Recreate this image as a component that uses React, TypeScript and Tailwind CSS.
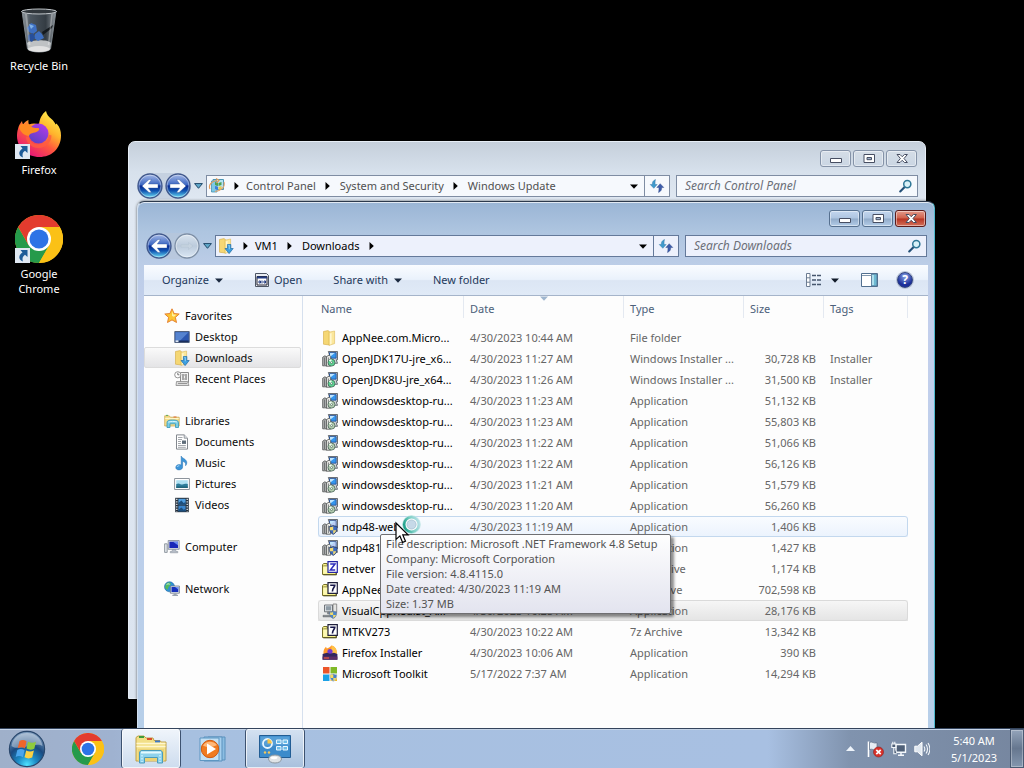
import React, { ReactNode } from "react";

/* ---------- small drawings ---------- */

const FolderShape = () => (
  <>
    <path d="M1.5 1.5 6 .6l1.4 1V15l-5.9-.8z" fill="#f5d774" stroke="#d3a93f" strokeWidth=".6" />
    <path d="M7 2.2 12.6 1v12.6L7 15.4z" fill="#fbe79b" stroke="#dcb958" strokeWidth=".6" />
    <path d="M8 3.4 9.6 3v11l-1.6.5z" fill="#fff6cf" />
  </>
);

const FolderIcon = () => (
  <svg width="16" height="16" viewBox="0 0 16 16" aria-hidden="true"><FolderShape /></svg>
);

const DownloadsIcon = () => (
  <svg width="16" height="16" viewBox="0 0 16 16" aria-hidden="true">
    <FolderShape />
    <path d="M9.4 6.5h3.4v4h2.4L11.1 15.6 7 10.5h2.4z" fill="#3c9fe0" stroke="#1c6aa8" strokeWidth=".7" />
    <path d="M10.3 7.3h1v4" stroke="#9fdcff" strokeWidth=".8" fill="none" />
  </svg>
);

const StarIcon = () => (
  <svg width="16" height="16" viewBox="0 0 16 16" aria-hidden="true">
    <path d="m8 .8 2.1 4.7 5.1.5-3.8 3.4 1.1 5.1L8 11.9l-4.5 2.6 1.1-5.1L.8 6l5.1-.5z" fill="#fcc534" stroke="#e2792a" strokeWidth=".9" strokeLinejoin="round" />
    <path d="m8 3 1.3 3.4 3 .4-2.4 2L8 8z" fill="#fff0a0" />
  </svg>
);

const DesktopIcon = () => (
  <svg width="16" height="16" viewBox="0 0 16 16" aria-hidden="true">
    <path d="M.8 2.5h14.400v11H.8z" fill="#2c57b0" stroke="#52627e" />
    <path d="M1.5 3.2h13L5 12.8H1.5z" fill="#6c9be0" opacity=".65" />
    <path d="M1.3 11.5h13.4v1.6H1.3z" fill="#1b2f5e" />
    <path d="M1.5 11.3h3v1.8h-3z" fill="#dfe9f7" />
  </svg>
);

const RecentIcon = () => (
  <svg width="16" height="16" viewBox="0 0 16 16" aria-hidden="true">
    <path d="M6.5 1.5h8v10h-8z" fill="#f3f3f3" stroke="#8b8b8b" />
    <path d="M8 4h5M8 6h2m1 0h2M8 8h5M9 3v6m3-6v6" stroke="#7c7c7c" strokeWidth=".8" />
    <path d="M2.5 10.5h11l1.5 4H2z" fill="#dedede" stroke="#898989" strokeWidth=".8" />
    <path d="M4 12.4h9" stroke="#777" strokeWidth=".8" />
    <circle cx="3.8" cy="3.8" r="3.1" fill="#fff" stroke="#888" strokeWidth=".9" />
    <path d="M3.8 1.8v2h1.6" stroke="#555" strokeWidth=".8" fill="none" />
  </svg>
);

const LibrariesIcon = () => (
  <svg width="16" height="16" viewBox="0 0 16 16" aria-hidden="true">
    <path d="M.7 13V2.8h4.5l1.2 1.4h8.8V13z" fill="#f7e08d" stroke="#c4a04a" strokeWidth=".7" />
    <path d="M1.2 5.5h13.5" stroke="#fff5c8" />
    <path d="M2 2.4h2" stroke="#5eaa5a" /><path d="M9.5 4h3" stroke="#e0662f" />
    <path d="M3 14.5V9.5C3 7.5 5 7 8.5 7s6 .6 6 2.5v5h-3v-3.7H6v3.7z" fill="#79cde5" stroke="#3595b5" strokeWidth=".8" />
    <path d="M4.3 9.2C6 8.3 11 8.2 13 9" stroke="#d8f5ff" fill="none" />
  </svg>
);

const DocumentIcon = () => (
  <svg width="16" height="16" viewBox="0 0 16 16" aria-hidden="true">
    <path d="M2.5.9h7.7l3.3 3.3v10.9h-11z" fill="#fff" stroke="#83888e" />
    <path d="M10.2.9v3.3h3.3" fill="#dfe3e8" stroke="#83888e" strokeWidth=".8" />
    <path d="M4 3.5h4.5M4 5.5h4M4 7.5h3M4 9.5h3M4 11.5h7.8M4 13.3h7.8" stroke="#8d9298" strokeWidth=".8" />
    <path d="M8 6.5h4v3.4H8z" fill="#5f6d7a" />
  </svg>
);

const MusicIcon = () => (
  <svg width="16" height="16" viewBox="0 0 16 16" aria-hidden="true">
    <path d="M7.2 1c.3 2.4 5.8 2.8 5.6 7-.1 1-.6 2-1.2 2.7.6-3-1.2-4-3-4.4v5.6c0 1.8-1.6 3-3.6 3s-3.2-1-3.2-2.500 1.400-2.800 3.400-2.800c.8 0 1.400.2 2 .5z" fill="#3d95d8" stroke="#1f6cb0" strokeWidth=".5" />
    <path d="M3 12c.3-.9 1.3-1.3 2.3-1.2" stroke="#b7e3ff" fill="none" />
  </svg>
);

const PicturesIcon = () => (
  <svg width="16" height="16" viewBox="0 0 16 16" aria-hidden="true">
    <path d="M.6 2.5h14.800v11H.6z" fill="#fff" stroke="#8d949c" />
    <path d="M2.2 4.200h11.600v7.600H2.200z" fill="#aee0f2" />
    <path d="M2.2 8.2c3-2 4 .6 6 .3s3-1.3 5.6-.6v3.900H2.200z" fill="#2d7c9a" />
    <path d="M2.2 10.600h11.600v1.200H2.200z" fill="#185b70" />
  </svg>
);

const VideosIcon = () => (
  <svg width="16" height="16" viewBox="0 0 16 16" aria-hidden="true">
    <path d="M1.2.8h13.6v14.4H1.2z" fill="#25303c" />
    <path d="M4.4 1.800h7.200v5.600H4.400z" fill="#4f9ee0" /><path d="M4.400 8.600h7.200v5.600H4.400z" fill="#3c86cd" />
    <path d="m4.400 6 3-2.400L9.600 6l2-1v2.400H4.400zM4.400 12.800l3-2.400 2.200 2.400 2-1v2.400H4.400z" fill="#1d4f7e" />
    <path d="M2.800 1.800v13M13.200 1.800v13" stroke="#e8edf2" strokeWidth="1.3" strokeDasharray="1.3 1.2" />
  </svg>
);

const ComputerIcon = () => (
  <svg width="16" height="16" viewBox="0 0 16 16" aria-hidden="true">
    <path d="M.6 4.800h2.600v8.600H.6z" fill="#e2e6ea" stroke="#7c858e" strokeWidth=".8" />
    <path d="M4.200 1.500h11v8.800h-11z" fill="#d7dce4" stroke="#7f8897" strokeWidth=".8" />
    <path d="M5.400 2.700h8.600v6.300H5.400z" fill="#1a28b8" />
    <path d="M9 2.700h5v3.500z" fill="#6a8bf0" />
    <path d="M8.500 10.500h3l.7 2h1.600v1.300H6.200v-1.300h1.600z" fill="#b6bdc7" stroke="#838b96" strokeWidth=".5" />
  </svg>
);

const NetworkIcon = () => (
  <svg width="16" height="16" viewBox="0 0 16 16" aria-hidden="true">
    <circle cx="5.5" cy="5.8" r="5" fill="#2f92d6" stroke="#1c659f" strokeWidth=".6" />
    <path d="M2 3c1.6-2 4.4-2 5 0L4.800 5.400 3.400 9 1 6.800zM6 7l3-1v3.800L7 10z" fill="#55bb59" />
    <path d="M2.600 3.600c1-.9 2-.9 3-.4" stroke="#d0f1ff" fill="none" />
    <path d="M6.400 5h9v7.200h-9z" fill="#dfe5ed" stroke="#6c7687" strokeWidth=".8" />
    <path d="M7.500 6h6.800v5H7.500z" fill="#1731bd" /><path d="M11 6h3.300v2.600z" fill="#7497f5" />
    <path d="M9.800 12.500h2.600l.4 1.200h1.200v1.200H8.300v-1.200h1.100z" fill="#9ca5b1" />
  </svg>
);

const InstallerIcon = ({ tone = "box" }: { tone?: "green" | "box" | "shield" }) => (
  <svg width="16" height="16" viewBox="0 0 16 16" aria-hidden="true">
    <path d="M6.300.5h9.200v8.300h-1.300l1.300 3.500h-5z" fill="#d3d6da" stroke="#4a5058" strokeWidth=".8" />
    <path d="M7.500 1.600h6.700v5.600H7.500z" fill={tone === "shield" ? "#b8cdf4" : "#3596ee"} stroke="#143b82" strokeWidth=".7" />
    <path d="M8 2.100h4.800L8 5.800z" fill="#bfe5ff" />
    <path d="m.7 6.200 2.200-1.400 2 1.200v8.800H.7z" fill="#b4b6b6" stroke="#4a4c4c" strokeWidth=".8" />
    <path d="M4.400 5.700 7.200 4l1.500 1.500v9.700H4.400z" fill="#e9eae6" stroke="#4a4c4c" strokeWidth=".8" />
    <path d="M2.500 6.500V14M6.400 6.500V14" stroke="#54585a" strokeWidth=".7" />
    {tone === "shield" ? (
      <>
        <path d="M7.200 7.600c1.700 0 2.900-.4 4-1.100 1.200.7 2.300 1.100 4 1.100 0 4-.9 6.300-4 7.800-3-1.500-4-3.800-4-7.800z" fill="#3d6cc0" stroke="#26375c" strokeWidth=".7" />
        <path d="M11.200 7.500v3.700H8c-.3-.9-.3-1.800-.3-3 1.500-.1 2.600-.3 3.500-.7zM11.200 11.200h3c-.5 1.500-1.400 2.600-3 3.500z" fill="#f4db72" />
      </>
    ) : (
      <>
        <circle cx="9.500" cy="11.600" r="3.500" fill={tone === "green" ? "#5fd493" : "#b4ccb0"} stroke="#38574b" strokeWidth=".7" />
        <path d="M9.500 11.600 6.800 9.600a3.300 3.300 0 0 1 2.700-1.400z" fill="#f3fff3" />
        <circle cx="9.500" cy="11.600" r="1" fill="#fff" stroke="#406252" strokeWidth=".6" />
      </>
    )}
  </svg>
);

const ArchiveIcon = ({ z }: { z?: boolean }) => (
  <svg width="16" height="16" viewBox="0 0 16 16" aria-hidden="true">
    <path d="M.5 13.500V3.800L1.600 2.500h3.600V4H14v9.500z" fill="#f8f28c" stroke="#77712a" />
    <path d="M1.300 5h4M1.300 13.900H14.500V11" stroke="#4b481b" strokeWidth=".8" fill="none" />
    <path d="M1.500 5.500h3.500v7H1.500z" fill="#fdf9b4" />
    <path d="M6 .7h9.300v10.600H6z" fill="#fff" stroke={z ? "#2525a5" : "#20203c"} strokeWidth="1.200" />
    {z
      ? <path d="M8.200 3h4.800L8.400 9h4.800" stroke="#2e2ebc" strokeWidth="1.500" fill="none" />
      : <path d="M8.200 3.200h4.600c0 2-2.400 3-2.400 6.300" stroke="#18184a" strokeWidth="1.600" fill="none" />}
  </svg>
);

const SetupIcon = () => (
  <svg width="16" height="16" viewBox="0 0 16 16" aria-hidden="true">
    <path d="M11 1h3.700v8H11z" fill="#e4e4e2" stroke="#777" strokeWidth=".8" />
    <path d="M2.500 2h8v6.800h-8z" fill="#e6eaed" stroke="#63686d" strokeWidth=".9" />
    <path d="M3.800 3.200h5.400v4.200H3.800z" fill="#8e9ba5" />
    <path d="M5.600 9h2v2h-2zM1 12.300h8v1.600H1z" fill="#8b9094" stroke="#606468" strokeWidth=".5" />
    <path d="M7.500 9c1.400 0 2.500-.3 3.600-1 1.100.7 2.200 1 3.600 1 0 3.500-.8 5.200-3.600 6.500C8.300 14.200 7.500 12.500 7.500 9z" fill="#4b86c9" stroke="#6c7786" strokeWidth=".6" />
    <path d="M11.100 9v3H8.300c-.2-.8-.3-1.500-.3-2.400 1.200-.1 2.200-.2 3.100-.6zM11.100 12h2.800c-.4 1.300-1.300 2.200-2.800 2.900z" fill="#f1d96b" />
  </svg>
);

const FirefoxInstallerIcon = () => (
  <svg width="16" height="16" viewBox="0 0 16 16" aria-hidden="true">
    <path d="M1.500 9C1 5.500 2.500 3 4 1.800l.8 1.700 2.400-.9L9.600.6c3.900 1.500 5.600 4 5 8.400z" fill="#ff9a2b" />
    <path d="M9.600.6c3.900 1.500 5.600 4 5 8.400H9z" fill="#ffc247" />
    <circle cx="8" cy="6.500" r="2.600" fill="#743bd2" />
    <path d="M.6 9 5 7.800l3 1 4-1L15.400 9v5.700H.6z" fill="#33265f" />
    <path d="M.6 11.500h14.800v3.200H.6z" fill="#5a2f66" />
    <path d="M2 13h5" stroke="#e8573d" strokeWidth="1.200" />
  </svg>
);

const ToolkitIcon = () => (
  <svg width="16" height="16" viewBox="0 0 16 16" aria-hidden="true">
    <path d="M1 1h6.500v6.500H1z" fill="#ec5529" /><path d="M8.500 1H15v6.500H8.500z" fill="#7fb927" />
    <path d="M1 8.500h6.500V15H1z" fill="#1ba1e6" /><path d="M8.500 8.500H15V15H8.500z" fill="#f3b91b" />
    <path d="M7.600 8.600c1.500 0 2.600-.3 3.700-1 1.100.7 2.200 1 3.700 1 0 3.500-.9 5.600-3.700 6.900-2.800-1.300-3.700-3.400-3.700-6.900z" fill="#4782c9" stroke="#d8dee6" strokeWidth=".6" />
    <path d="M11.300 8.300v3.600H8.500c-.3-1-.4-1.800-.4-2.800zM11.300 11.900h2.900c-.5 1.400-1.400 2.400-2.900 3.100z" fill="#f6da62" />
  </svg>
);

const UpdateIcon = () => (
  <svg width="18" height="18" viewBox="0 0 18 18" aria-hidden="true">
    <path d="M5 2.500h10.500v10H5z" fill="#b4e3f3" stroke="#4a95b5" />
    <path d="M3.500 4H9v11H3.500z" fill="#7dc8e6" stroke="#4793b1" strokeWidth=".8" />
    <path d="m7 5 3 1v3L7 8zM10.500 6l3-1v3l-3 1z" fill="#4da054" /><path d="m7 9 3 1v3l-3-1z" fill="#3b7ddd" /><path d="m10.500 10 3-1v3l-3 1z" fill="#eccb4c" />
    <path d="M2 12C0 8 4 4 9 3.500M8 1.500l3 1.800L8.500 6" stroke="#e79a56" strokeWidth="1.200" fill="none" />
    <path d="M16 5c1.500 5-3 9-9 9.500" stroke="#e3a36c" strokeWidth="1.100" fill="none" />
  </svg>
);

const Down = ({ color = "#1b2a40" }: { color?: string }) => (
  <svg width="8" height="5" viewBox="0 0 8 5" aria-hidden="true"><path d="M0 .5h8L4 4.800z" fill={color} /></svg>
);

const Crumb = () => (
  <svg width="5" height="8" viewBox="0 0 5 8" aria-hidden="true"><path d="M.5 0 4.800 4 .5 8z" fill="#000" /></svg>
);

const RefreshIcon = () => (
  <svg width="16" height="16" viewBox="0 0 16 16" aria-hidden="true">
    <path d="M6.500 1.500C4 2.500 3.200 4.200 3.300 6.500H1.200l3.600 3.800 3.400-3.800H6.100c-.1-2 0-3.500.4-5z" fill="#3f9bcd" stroke="#2c6d9c" strokeWidth=".4" />
    <path d="M9.500 14.500c2.500-1 3.300-2.700 3.200-5h2.100l-3.600-3.800-3.400 3.800h2.100c.1 2 0 3.500-.4 5z" fill="#3c5caa" stroke="#2a4484" strokeWidth=".4" />
  </svg>
);

const SearchIcon = () => (
  <svg width="14" height="14" viewBox="0 0 14 14" aria-hidden="true">
    <path d="M1.300 12.800 6 8" stroke="#245077" strokeWidth="2.200" strokeLinecap="round" />
    <circle cx="8.800" cy="5" r="3.800" fill="#d8f1f8" stroke="#2f7796" strokeWidth="1.600" />
  </svg>
);

const NavArrow = ({ dir, disabled, label }: { dir: "left" | "right"; disabled?: boolean; label: string }) => (
  <button type="button" aria-label={label} className="block size-[26px] shrink-0 rounded-full">
    <svg width="26" height="26" viewBox="0 0 26 26" aria-hidden="true">
      <defs>
        <linearGradient id="navBall" x1="0" y1="0" x2="0" y2="1">
          <stop offset="0" stopColor="#a9bce8" /><stop offset=".44" stopColor="#3e68c2" />
          <stop offset=".5" stopColor="#0b2c93" /><stop offset=".7" stopColor="#1053b0" /><stop offset="1" stopColor="#6fe6fb" />
        </linearGradient>
        <linearGradient id="navOff" x1="0" y1="0" x2="0" y2="1">
          <stop offset="0" stopColor="#dae4ef" /><stop offset=".5" stopColor="#bccbdc" /><stop offset="1" stopColor="#dbe8f5" />
        </linearGradient>
      </defs>
      <circle cx="13" cy="13" r="12" fill={disabled ? "url(#navOff)" : "url(#navBall)"} stroke={disabled ? "#7d8fa6" : "#42598c"} strokeWidth="1.300" />
      <circle cx="13" cy="13" r="10.900" fill="none" stroke="#fff" strokeOpacity=".4" />
      <g transform={dir === "right" ? "translate(26 0) scale(-1 1)" : undefined}>
        {disabled
          ? <path d="M7 13l4.500-3.500v2.300H19v2.400h-7.500v2.300z" fill="#c6d3e0" stroke="#b3c2d2" strokeWidth=".5" />
          : <path d="M5 13l7-6.500h2.500L11.300 11H21v4h-9.700l3.200 4.500H12z" fill="#fff" stroke="#31569c" strokeWidth=".4" />}
      </g>
    </svg>
  </button>
);

/* ---------- window frame ---------- */

const captionGlyphs: Record<string, ReactNode> = {
  Minimize: <path d="M2.500 6.500h11v4h-11z" fill="#fff" stroke="#474e62" />,
  Maximize: (
    <>
      <path d="M3 2.500h10.500v8H3z" fill="#fff" stroke="#474e62" />
      <path d="M6 5.500h4.500v2.200H6z" fill="#9fb2cc" stroke="#474e62" />
    </>
  ),
  Close: (
    <path d="M3 2.500h3l2.200 2.200 2.200-2.200h3L10 6.500l3.400 4h-3L8.200 8.300 6 10.500H3l3.400-4z" fill="#fff" stroke="#474e62" strokeLinejoin="round" />
  ),
};

function CaptionButtons({ active }: { active?: boolean }) {
  return (
    <div className="flex h-[33px] items-start justify-end gap-0.5 pt-2 pr-2">
      {["Minimize", "Maximize", "Close"].map((name) => {
        const tone = !active
          ? "border-[#8593a8] bg-linear-to-b from-[#d5dde7] to-[#cad6e3]"
          : name === "Close"
            ? "border-[#5b1c1c] bg-[linear-gradient(#e39b8c_0%,#d0604b_48%,#b53322_52%,#d4705a_100%)]"
            : "border-[#56708f] bg-[linear-gradient(#c3d6ee_0%,#aec5e1_48%,#91abc9_52%,#b3cce8_100%)]";
        return (
          <button key={name} type="button" aria-label={name}
            className={`flex h-[17px] w-[31px] items-center justify-center rounded-[3px] border shadow-[inset_0_0_0_1px_rgba(255,255,255,0.45)] ${tone}`}>
            <svg width="16" height="13" viewBox="0 0 16 13" aria-hidden="true">{captionGlyphs[name]}</svg>
          </button>
        );
      })}
    </div>
  );
}

function AddressRow({ icon, crumbs, trailing, search, active }: {
  icon: ReactNode; crumbs: string[]; trailing?: boolean; search: string; active?: boolean;
}) {
  const border = active ? "border-[#64799a]" : "border-[#7f8da3]";
  const fill = active ? "bg-[#edf1fc]" : "bg-[#f6f9fd]";
  return (
    <div className="flex h-[22px] items-center pr-[7px] pl-2">
      <div className="flex items-center gap-0.5 rounded-full bg-[#b9c6d8]/60">
        <NavArrow dir="left" label="Back" />
        <NavArrow dir="right" label="Forward" disabled={active} />
      </div>
      <button type="button" aria-label="Recent pages" className="flex w-[15px] justify-center">
        <svg width="9" height="6" viewBox="0 0 9 6" aria-hidden="true"><path d="M.6.6h7.800L4.500 5.300z" fill="#5fa9cb" stroke="#1f4668" /></svg>
      </button>
      <div className={`flex h-[22px] flex-1 items-center border ${border} ${fill}`}>
        <span className="flex w-[19px] justify-center">{icon}</span>
        <nav aria-label="Location" className={`flex flex-1 items-center ${active ? "text-black" : "text-[#505050]"}`}>
          {crumbs.map((c, i) => (
            <span key={c} className="flex items-center">
              <span className={`flex justify-center ${i === 0 ? "w-5" : "w-6"}`}><Crumb /></span>
              <a href="#">{c}</a>
            </span>
          ))}
          {trailing && <span className="flex w-6 justify-center"><Crumb /></span>}
        </nav>
        <button type="button" aria-label="Previous locations" className="flex w-[21px] justify-center"><Down color="#000" /></button>
        <button type="button" aria-label="Refresh" className={`flex h-full w-[25px] items-center justify-center border-l ${border}`}><RefreshIcon /></button>
      </div>
      <label className={`ml-1.5 flex h-[22px] w-[242px] items-center border pr-[5px] pl-2 ${border} ${fill}`}>
        <input type="search" placeholder={search} aria-label={search}
          className="w-full min-w-0 bg-transparent text-[12px] italic outline-none placeholder:text-[#6b6f78]" />
        <SearchIcon />
      </label>
    </div>
  );
}

/* ---------- explorer content ---------- */

type NavItem = { name: string; icon: ReactNode; selected?: boolean };
const groups: { head: NavItem; items: NavItem[] }[] = [
  {
    head: { name: "Favorites", icon: <StarIcon /> },
    items: [
      { name: "Desktop", icon: <DesktopIcon /> },
      { name: "Downloads", icon: <DownloadsIcon />, selected: true },
      { name: "Recent Places", icon: <RecentIcon /> },
    ],
  },
  {
    head: { name: "Libraries", icon: <LibrariesIcon /> },
    items: [
      { name: "Documents", icon: <DocumentIcon /> },
      { name: "Music", icon: <MusicIcon /> },
      { name: "Pictures", icon: <PicturesIcon /> },
      { name: "Videos", icon: <VideosIcon /> },
    ],
  },
  { head: { name: "Computer", icon: <ComputerIcon /> }, items: [] },
  { head: { name: "Network", icon: <NetworkIcon /> }, items: [] },
];

function NavigationPane() {
  return (
    <nav aria-label="Folders" className="flex w-[159px] shrink-0 flex-col gap-[21px] border-r border-[#d6e0ee] pt-[9px] pr-px">
      {groups.map(({ head, items }) => (
        <ul key={head.name}>
          <li><a href="#" className="flex h-[21px] items-center gap-[5px] pl-5">{head.icon}{head.name}</a></li>
          {items.map((it) => (
            <li key={it.name}>
              <a href="#" className={`flex h-[21px] items-center gap-[5px] border pl-[29px] ${it.selected ? "rounded-[2px] border-[#dcdcdc] bg-linear-to-b from-[#fafafa] to-[#e4e4e6]" : "border-transparent"}`}>
                {it.icon}{it.name}
              </a>
            </li>
          ))}
        </ul>
      ))}
    </nav>
  );
}

type FileRow = { icon: ReactNode; name: string; date: string; type: string; size?: string; tags?: string; state?: "hover" | "selected" };
const d = "4/30/2023 ";
const files: FileRow[] = [
  { icon: <FolderIcon />, name: "AppNee.com.Micro...", date: d + "10:44 AM", type: "File folder" },
  { icon: <InstallerIcon tone="green" />, name: "OpenJDK17U-jre_x6...", date: d + "11:27 AM", type: "Windows Installer ...", size: "30,728 KB", tags: "Installer" },
  { icon: <InstallerIcon tone="green" />, name: "OpenJDK8U-jre_x64...", date: d + "11:26 AM", type: "Windows Installer ...", size: "31,500 KB", tags: "Installer" },
  { icon: <InstallerIcon />, name: "windowsdesktop-ru...", date: d + "11:23 AM", type: "Application", size: "51,132 KB" },
  { icon: <InstallerIcon />, name: "windowsdesktop-ru...", date: d + "11:23 AM", type: "Application", size: "55,803 KB" },
  { icon: <InstallerIcon />, name: "windowsdesktop-ru...", date: d + "11:22 AM", type: "Application", size: "51,066 KB" },
  { icon: <InstallerIcon />, name: "windowsdesktop-ru...", date: d + "11:22 AM", type: "Application", size: "56,126 KB" },
  { icon: <InstallerIcon />, name: "windowsdesktop-ru...", date: d + "11:21 AM", type: "Application", size: "51,579 KB" },
  { icon: <InstallerIcon />, name: "windowsdesktop-ru...", date: d + "11:20 AM", type: "Application", size: "56,260 KB" },
  { icon: <InstallerIcon tone="shield" />, name: "ndp48-web", date: d + "11:19 AM", type: "Application", size: "1,406 KB", state: "hover" },
  { icon: <InstallerIcon tone="shield" />, name: "ndp481", date: d + "11:19 AM", type: "Application", size: "1,427 KB" },
  { icon: <ArchiveIcon z />, name: "netver", date: d + "10:44 AM", type: "zip Archive", size: "1,174 KB" },
  { icon: <ArchiveIcon />, name: "AppNee", date: d + "10:42 AM", type: "7z Archive", size: "702,598 KB" },
  { icon: <SetupIcon />, name: "VisualCppRedist_A...", date: d + "10:25 AM", type: "Application", size: "28,176 KB", state: "selected" },
  { icon: <ArchiveIcon />, name: "MTKV273", date: d + "10:22 AM", type: "7z Archive", size: "13,342 KB" },
  { icon: <FirefoxInstallerIcon />, name: "Firefox Installer", date: d + "10:06 AM", type: "Application", size: "390 KB" },
  { icon: <ToolkitIcon />, name: "Microsoft Toolkit", date: "5/17/2022 7:37 AM", type: "Application", size: "14,294 KB" },
];

const rowTone = {
  hover: "rounded-[3px] bg-linear-to-b from-[#fafcff] to-[#ebf3fd] outline outline-[#c3d8ee] -outline-offset-1",
  selected: "rounded-[3px] bg-linear-to-b from-[#f7f7f7] to-[#e4e4e4] outline outline-[#dadada] -outline-offset-1",
};

function FileTable() {
  return (
    <div className="min-w-0 flex-1 pl-[15px]">
      <table className="w-[590px] table-fixed border-separate border-spacing-0 text-left whitespace-nowrap">
        <colgroup>
          <col className="w-[146px]" /><col className="w-[160px]" /><col className="w-[120px]" /><col className="w-[80px]" /><col />
        </colgroup>
        <thead>
          <tr className="h-[31px] text-[#4c607a]">
            {["Name", "Date", "Type", "Size", "Tags"].map((h, i) => (
              <th key={h} className={`relative p-0 pb-[5px] font-normal ${i === 0 ? "pl-[3px]" : "pl-1.5"}`}>
                <button type="button">{h}</button>
                <span className="absolute top-0 right-0 h-[22px] w-px bg-[#e4e9f1]" />
                {h === "Date" && <span className="absolute top-0 left-1/2 -translate-x-1/2"><Down color="#9fb6cf" /></span>}
              </th>
            ))}
          </tr>
        </thead>
        <tbody className="text-[#666]">
          {files.map((f, i) => (
            <tr key={i} className={`h-[21px] ${f.state ? rowTone[f.state] : ""}`}>
              <td className="p-0 pl-1 text-black"><span className="flex items-center gap-1">{f.icon}{f.name}</span></td>
              <td className="p-0 pl-1.5">{f.date}</td>
              <td className="p-0 pl-1.5">{f.type}</td>
              <td className="p-0 pr-2 text-right">{f.size}</td>
              <td className="p-0 pl-1.5">{f.tags}</td>
            </tr>
          ))}
        </tbody>
      </table>
    </div>
  );
}

function CommandBar() {
  return (
    <div className="flex h-[31px] items-center border-b border-[#a5b4ca] bg-[linear-gradient(#fafcff_0%,#eaf2fc_48%,#dce6f4_52%,#e0eaf7_100%)] pr-[15px] pl-[18px] text-[#1e395b]">
      <button type="button" className="flex items-center gap-1.5">Organize <Down /></button>
      <button type="button" className="ml-[31px] flex items-center gap-1">
        <svg width="16" height="16" viewBox="0 0 16 16" aria-hidden="true">
          <path d="M1.500 1.500h11l2 2v11h-13z" fill="#e9edf2" stroke="#4c5564" />
          <path d="M3 4.500h10v8.500H3z" fill="#fff" stroke="#223" />
          <path d="M3 4.500h10v2H3z" fill="#223c82" />
          <path d="M5 9h1.500v2H5zM8 8.500v3M10 9h1.500v2H10z" fill="none" stroke="#223c82" />
        </svg>
        Open
      </button>
      <button type="button" className="ml-[31px] flex items-center gap-1.5">Share with <Down /></button>
      <button type="button" className="ml-[31px]">New folder</button>
      <div className="ml-auto flex items-center">
        <button type="button" aria-label="Change your view">
          <svg width="16" height="14" viewBox="0 0 16 14" aria-hidden="true">
            <path d="M.5.500h3.500v13H.5zM.5 4.800h3.500M.5 9.200h3.500" fill="#fff" stroke="#6c7c92" />
            <path d="M6 2.500h10M6 7h10M6 11.500h10" stroke="#46566e" strokeWidth="1.300" strokeDasharray="4 1" />
          </svg>
        </button>
        <button type="button" aria-label="More views" className="flex w-[26px] justify-center"><Down color="#111a28" /></button>
        <button type="button" aria-label="Show the preview pane" className="ml-[13px]">
          <svg width="17" height="14" viewBox="0 0 17 14" aria-hidden="true">
            <path d="M.5.500h16v13H.5z" fill="#fff" stroke="#516f8f" />
            <path d="M10.500 1h5.500v12h-5.500z" fill="#6db9d2" stroke="#516f8f" strokeWidth=".8" />
            <path d="M1 2.500h9.500" stroke="#8298af" /><path d="M12 2v10" stroke="#c4ecf6" strokeWidth="1.500" />
          </svg>
        </button>
        <button type="button" aria-label="Get help" className="ml-[19px] flex size-4 items-center justify-center rounded-full border border-[#33467f] bg-[radial-gradient(circle_at_50%_25%,#8ba6e8,#1c2f99_65%)] text-[12px] leading-none font-bold text-white shadow-[0_0_0_1px_#b7c2d6]">?</button>
      </div>
    </div>
  );
}

/* ---------- desktop ---------- */

const ChromeLogo = ({ size }: { size: number }) => (
  <svg width={size} height={size} viewBox="0 0 48 48" aria-hidden="true">
    <circle cx="24" cy="24" r="24" fill="#fbc116" />
    <path d="M24 24 3.200 12A24 24 0 0 1 44.800 12z" fill="#e33b2e" />
    <path d="M3.200 12a24 24 0 0 0 20.800 36L34.400 30 24 24 13.600 30z" fill="#259a4b" />
    <path d="M24 12h20.800A24 24 0 0 1 24 48l10.400-18z" fill="#fbc116" />
    <path d="M3.200 12 13.600 30 24 24V12z" fill="#e33b2e" />
    <circle cx="24" cy="24" r="12" fill="#fff" /><circle cx="24" cy="24" r="9.500" fill="#2d73e6" />
  </svg>
);

const FirefoxLogo = () => (
  <svg width="48" height="48" viewBox="0 0 48 48" aria-hidden="true">
    <defs>
      <linearGradient id="ffBody" x1=".85" y1=".05" x2=".25" y2=".95">
        <stop offset="0" stopColor="#fff04d" /><stop offset=".35" stopColor="#ffb52d" />
        <stop offset=".62" stopColor="#ff5a3c" /><stop offset="1" stopColor="#e5157a" />
      </linearGradient>
      <linearGradient id="ffGlobe" x1=".8" y1="0" x2=".2" y2="1"><stop offset="0" stopColor="#b43ae8" /><stop offset="1" stopColor="#5741c4" /></linearGradient>
    </defs>
    <path d="M3 18c.6-3 2-5.500 4-8 .2 1.500.5 2.500 1 3.500 1.500-2 3.300-3.700 5.500-4.500-.3 1.800 0 3.500.5 4.500 3-1.300 7-1.500 10 0C24.500 8 27 3 31 0c.8 3.500 2.500 5.500 5.500 8 2 1.700 3.300 3.500 4 5.500l1-1C45 16 46 20 46 24.500 46 37.500 36.500 46 24.500 46S2 37 2 25c0-2.500.3-5 1-7z" fill="url(#ffBody)" />
    <circle cx="23.500" cy="22.500" r="10" fill="url(#ffGlobe)" />
    <path d="M4 16c1.500-3 3-3.500 4-3 2 .5 4 .3 6 0 2 2.500 4 4.500 9.500 4 1.200.8.8 2.200-.8 3.200-3.500 2.300-8.200 1.300-8.700 4.800-4 0-9-4-10-9z" fill="#ff8a22" />
    <path d="M14 25c0 5 4 8.500 9 8.500 6 0 10.500-4 10.500-10l3 1c0 7-6 12.500-13 12.500S11 32 11 26z" fill="#ff5b41" opacity=".8" />
  </svg>
);

const RecycleBin = () => (
  <svg width="48" height="48" viewBox="0 0 48 48" aria-hidden="true">
    <defs><linearGradient id="bin" x1="0" x2="1"><stop offset="0" stopColor="#8f979d" /><stop offset=".25" stopColor="#4b555e" /><stop offset=".7" stopColor="#343c43" /><stop offset="1" stopColor="#949ba1" /></linearGradient></defs>
    <path d="M7 4h34l-5.500 38c-3 4-20 4-23 0z" fill="url(#bin)" stroke="#7f878d" />
    <ellipse cx="24" cy="4.500" rx="17.500" ry="2.500" fill="#30363b" stroke="#c3c8cc" strokeWidth="1" />
    <path d="M12 36c4-3 20-4 24 0l-1 6c-4 3.500-18 3.500-22 0z" fill="#bfc2c4" /><ellipse cx="24" cy="42" rx="11" ry="3" fill="#e2e2e2" />
    <path d="m12 21 4-5 5 2 1 6-4 3-4-2zM20 27l4-3 3 3 2 4-6 3-4-3z" fill="#3e6fc0" />
    <path d="m13 28 5-2 2 5-3 4-4-2z" fill="#274f9a" /><path d="m14 17 5 2-3 3z" fill="#7fb2e8" />
    <path d="m27 25 11-7-1 3-9 7z" fill="#14191d" />
    <path d="m11 7 3.500 31" stroke="#fff" strokeOpacity=".3" strokeWidth="2" /><path d="M37 7 33.500 38" stroke="#fff" strokeOpacity=".3" strokeWidth="1.500" />
  </svg>
);

const ShortcutMark = () => (
  <svg width="15" height="15" viewBox="0 0 15 15" className="absolute bottom-0 left-0" aria-hidden="true">
    <path d="M0 0h15v15H0z" fill="#dfe8f2" />
    <path d="M5.500 2h7v7L10 6.800C7.500 8.500 7 10.500 8 13.500 3.500 12 2.800 7.500 7.500 4.500z" fill="#1d5b98" />
  </svg>
);

function DesktopItem({ label, icon, shortcut }: { label: string; icon: ReactNode; shortcut?: boolean }) {
  return (
    <a href="#" className="flex h-[104px] w-[78px] flex-col items-center gap-[3px] text-center leading-[15px] text-white">
      <span className="relative">{icon}{shortcut && <ShortcutMark />}</span>
      <span className="w-[70px]">{label}</span>
    </a>
  );
}

/* ---------- taskbar ---------- */

const StartOrb = () => (
  <svg width="38" height="38" viewBox="0 0 38 38" aria-hidden="true">
    <defs>
      <radialGradient id="orb" cx=".5" cy=".95" r=".9"><stop offset="0" stopColor="#4fe3ff" /><stop offset=".3" stopColor="#1c8cc6" /><stop offset=".62" stopColor="#1a4a80" /><stop offset="1" stopColor="#7c9bbd" /></radialGradient>
    </defs>
    <circle cx="19" cy="19" r="17.600" fill="url(#orb)" stroke="#29476c" strokeWidth="1.200" />
    <path d="M3.500 16C5 7 12 3 19 3s14 4 15.500 13C28 11 10 22 3.500 16z" fill="#fff" opacity=".38" />
    <path d="M11.500 11c2.500-1.500 5-1 7 .3L17 18.500c-2.500-1.400-4.700-1.500-7.300-.3z" fill="#f0652a" />
    <path d="M20 11.800c2.800 1.200 5.300 1.400 8-.1l-1.700 7c-2.700 1.300-5.200 1.200-7.800-.1z" fill="#8fcb3d" />
    <path d="M9.300 20c2.500-1.300 5-1.100 7.300.2l-1.700 7c-2.300-1.300-4.700-1.500-7.200-.2z" fill="#4aa5ec" />
    <path d="M18.200 20.600c2.500 1.200 5 1.300 7.700 0l-1.700 7c-2.500 1.200-5.200 1.100-7.700-.3z" fill="#fbd143" />
  </svg>
);

const ExplorerLarge = () => (
  <svg width="34" height="30" viewBox="0 0 34 30" aria-hidden="true">
    <path d="M2 27V3.500L4 2h6l2 2h7l1 2.500h6L27 8h5v19z" fill="#f2df87" stroke="#bfa04a" />
    <path d="M5 3h5" stroke="#3d9c3c" strokeWidth="2" /><path d="M13 5h5" stroke="#d94c2b" strokeWidth="2" /><path d="M21 7.500h5" stroke="#3c79c9" strokeWidth="2" />
    <path d="M2.500 9.500h29M2.500 12.500h29" stroke="#fff7cf" strokeWidth="1.500" />
    <path d="M4 15h26v12H4z" fill="#ebd276" />
    <path d="M5.500 29V19c0-1.500 1-2.500 2.500-2.500h18c1.500 0 2.500 1 2.500 2.500v10h-5v-5.500h-13V29z" fill="#8ed2ec" stroke="#4a9dbd" />
    <path d="M7 18.500h20" stroke="#e4faff" strokeWidth="2" /><path d="M8 21v7M26 21v7" stroke="#c9f1ff" strokeWidth="1.500" strokeDasharray="1.500 1.500" />
  </svg>
);

const MediaPlayer = () => (
  <svg width="28" height="26" viewBox="0 0 28 26" aria-hidden="true">
    <path d="M9 1h17v23H9z" fill="#8bbde2" stroke="#5b91bd" /><path d="M5 1h18v24H5z" fill="#a7d0ee" stroke="#5b91bd" />
    <path d="M1 2h19v22.500H1z" fill="#c3e0f4" stroke="#5d96c2" />
    <circle cx="11" cy="13" r="8.700" fill="#f07b20" stroke="#d15a10" /><path d="M4 9.500C6 5 14 4 18 9c-4 2-9 3-14 .5z" fill="#ffb879" />
    <path d="M8 7.500 17 13l-9 5.500z" fill="#fff" />
  </svg>
);

const ControlPanelLarge = () => (
  <svg width="34" height="30" viewBox="0 0 34 30" aria-hidden="true">
    <path d="M1.500 1.500h31v22h-31z" fill="#3c8bcb" stroke="#225d94" /><path d="M2.500 2.500h29v9h-29z" fill="#6bb0e2" opacity=".55" />
    <circle cx="9.500" cy="9.500" r="4.500" fill="none" stroke="#e8f7ff" strokeWidth="1.800" /><path d="M9.500 9.500V5A4.500 4.500 0 0 1 14 9.500z" fill="#f8c64a" />
    <path d="M18.500 6h4.500v3.500h-4.500zM25 6h4.500v3.500H25zM18.500 12.500h4.500V16h-4.500zM25 12.500h4.500V16H25z" fill="#6ebde8" stroke="#e8f7ff" />
    <circle cx="7" cy="18.500" r="1.200" fill="#f4c75a" /><circle cx="11" cy="18.500" r="1.200" fill="#f4c75a" />
    <ellipse cx="17" cy="25" rx="6.500" ry="4" fill="#dfe3e6" stroke="#8d979f" /><ellipse cx="16" cy="23.800" rx="3.500" ry="1.400" fill="#fff" />
  </svg>
);

function Taskbar() {
  const running = "border-x border-[#3d5270] bg-linear-to-b shadow-[inset_0_0_0_1px_rgba(255,255,255,0.7)] rounded-[3px]";
  return (
    <footer className="relative z-10 flex h-10 shrink-0 items-stretch border-t border-[#34445c] bg-[linear-gradient(to_right,#9fb0ca_0%,#9fb2d0_11%,#a7c0e0_18%,#a8c0e2_75%,#8093ae_83%,#76869f_100%)] shadow-[inset_0_1px_0_#c6d5e8]">
      <button type="button" aria-label="Start" className="flex w-[54px] items-center justify-center"><StartOrb /></button>
      <button type="button" aria-label="Google Chrome" className="flex w-[67px] items-center justify-center"><ChromeLogo size={32} /></button>
      <button type="button" aria-label="Windows Explorer" className={`flex w-[60px] items-center justify-center from-[#f0f5fb] to-[#cddcee] ${running}`}><ExplorerLarge /></button>
      <button type="button" aria-label="Windows Media Player" className="flex w-16 items-center justify-center"><MediaPlayer /></button>
      <button type="button" aria-label="Control Panel" className={`flex w-[60px] items-center justify-center from-[#d5e2f1] to-[#a8c0dd] ${running}`}><ControlPanelLarge /></button>
      <div className="ml-auto flex items-center text-white">
        <button type="button" aria-label="Show hidden icons">
          <svg width="9" height="5" viewBox="0 0 9 5" aria-hidden="true"><path d="M4.500 0 9 5H0z" fill="#eef4fb" /></svg>
        </button>
        <button type="button" aria-label="Action Center" className="ml-3">
          <svg width="17" height="18" viewBox="0 0 17 18" aria-hidden="true">
            <path d="M1.500 1.500v15.500" stroke="#fff" strokeWidth="1.600" />
            <path d="M2.500 2.500c3-1.500 4 1.500 7.500.3v7c-3 1-4.500-1.500-7.500-.3z" fill="#e7edf4" stroke="#53637a" strokeWidth=".6" />
            <circle cx="11.500" cy="12" r="5" fill="#d8312a" stroke="#8e1f1b" strokeWidth=".6" />
            <path d="m9.300 9.800 4.400 4.400m0-4.400-4.400 4.400" stroke="#fff" strokeWidth="1.700" />
          </svg>
        </button>
        <button type="button" aria-label="Network" className="ml-[7px]">
          <svg width="16" height="16" viewBox="0 0 16 16" aria-hidden="true">
            <path d="M5 3.500h9.500v7.700H5z" fill="#4f6078" stroke="#f4f8fc" strokeWidth="1.400" />
            <path d="M7 14.200h6M10 11.500v2.500" stroke="#f4f8fc" strokeWidth="1.500" />
            <path d="M.8 3h4v3.500h-4zM1.800.8V3M3.800.8V3M2.800 6.500v6.300h3" stroke="#f4f8fc" fill="#4f6078" strokeWidth="1.100" />
          </svg>
        </button>
        <button type="button" aria-label="Volume" className="ml-[7px]">
          <svg width="16" height="16" viewBox="0 0 16 16" aria-hidden="true">
            <path d="M.8 5.200h2.700L8 1.200v13.600l-4.500-4H.8z" fill="#dfe7f0" stroke="#fff" />
            <path d="M10 5.500c1 1.500 1 3.500 0 5M12 3.500c2 2.500 2 6.500 0 9M14 2c2.300 3.500 2.300 8.500 0 12" stroke="#f4f8fc" fill="none" strokeWidth="1.100" />
          </svg>
        </button>
        <button type="button" className="ml-3 flex w-16 flex-col items-center leading-[17px]"><span>5:40 AM</span><span>5/1/2023</span></button>
        <button type="button" aria-label="Show desktop" className="ml-1 h-[39px] w-3.5 border border-[#4a5a72] bg-linear-to-b from-[#94a4ba] via-[#66778f] to-[#8496ae] shadow-[inset_0_0_0_1px_rgba(255,255,255,0.3)]" />
      </div>
    </footer>
  );
}

function HoverTip() {
  return (
    <div role="tooltip" className="absolute top-[534px] left-[380px] min-w-[291px] rounded-[2px] border border-[#6f6f72] bg-linear-to-b from-[#fefefe] to-[#e3e4ef] px-[5px] pt-px pb-0.5 leading-[15px] whitespace-nowrap text-[#535353] shadow-[3px_3px_3px_rgba(0,0,0,0.45)]">
      <p>File description: Microsoft .NET Framework 4.8 Setup</p>
      <p>Company: Microsoft Corporation</p>
      <p>File version: 4.8.4115.0</p>
      <p>Date created: 4/30/2023 11:19 AM</p>
      <p>Size: 1.37 MB</p>
    </div>
  );
}

const BusyPointer = () => (
  <svg width="28" height="32" viewBox="0 0 28 32" className="absolute top-[514px] left-[394px]" aria-hidden="true">
    <defs>
      <linearGradient id="ring" x1="0" y1=".6" x2="1" y2=".3"><stop offset="0" stopColor="#1fa08b" /><stop offset=".5" stopColor="#7ccfc4" /><stop offset="1" stopColor="#b5dfe6" /></linearGradient>
    </defs>
    <circle cx="17.500" cy="10.500" r="7.500" fill="#fff" stroke="url(#ring)" strokeWidth="3" />
    <circle cx="17.500" cy="10.500" r="9" fill="none" stroke="#c9ebe8" strokeWidth=".6" />
    <circle cx="17.500" cy="10.500" r="4.600" fill="#c6d9e8" stroke="#9ebacb" strokeWidth=".7" />
    <path d="M2 9v16.500l3.900-3.600 2.700 6.500 2.900-1.200-2.700-6.300h5.300z" fill="#fff" stroke="#000" strokeWidth="1.200" />
  </svg>
);

export default function App() {
  return (
    <div className="flex min-h-screen w-full flex-col overflow-hidden bg-black font-['Noto_Sans','Open_Sans',sans-serif] text-[11px] leading-4 text-[#0b0b0b]">
      <main className="relative flex-1 overflow-hidden">
        <div className="flex flex-col pt-[7px]">
          <DesktopItem label="Recycle Bin" icon={<RecycleBin />} />
          <DesktopItem label="Firefox" icon={<FirefoxLogo />} shortcut />
          <DesktopItem label="Google Chrome" icon={<ChromeLogo size={48} />} shortcut />
        </div>

        <section aria-label="Windows Update" className="absolute top-[141px] bottom-[29px] left-32 w-[798px] rounded-t-[7px] border border-[#e7eef6] bg-[linear-gradient(#c5cfdb_0px,#d7e1ec_30px,#e0e8f2_62px,#dbe4ef_100%)]">
          <CaptionButtons />
          <AddressRow icon={<UpdateIcon />} crumbs={["Control Panel", "System and Security", "Windows Update"]} search="Search Control Panel" />
        </section>

        <section aria-label="Downloads" className="absolute top-[201px] -bottom-px left-[137px] flex w-[798px] flex-col rounded-t-[7px] border border-[#2d3a4d] border-r-[#4fb9cd] border-l-[#d2e0f0] bg-[linear-gradient(#9ab5d5_0px,#aec5e0_30px,#bccde7_63px,#c3cfec_120px,#b7cfe9_100%)] shadow-[0_0_3px_rgba(0,0,0,0.6),inset_0_1px_0_rgba(255,255,255,0.7)]">
          <CaptionButtons active />
          <AddressRow active icon={<DownloadsIcon />} crumbs={["VM1", "Downloads"]} trailing search="Search Downloads" />
          <div className="mx-1.5 mt-2 flex min-h-0 flex-1 flex-col bg-[#fdfdfd]">
            <CommandBar />
            <div className="flex min-h-0 flex-1">
              <NavigationPane />
              <FileTable />
            </div>
          </div>
        </section>

        <HoverTip />
        <BusyPointer />
      </main>
      <Taskbar />
    </div>
  );
}
